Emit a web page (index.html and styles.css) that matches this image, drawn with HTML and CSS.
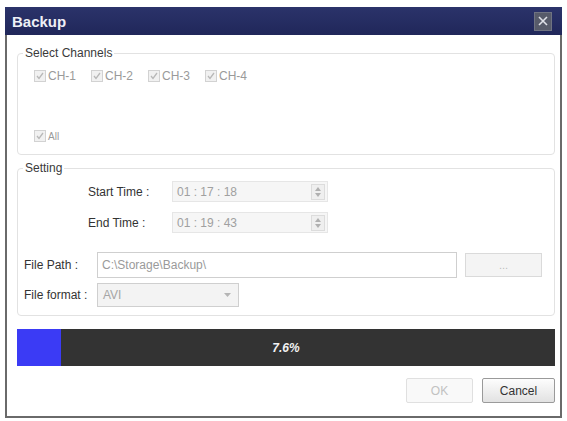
FILE: index.html
```html
<!DOCTYPE html>
<html lang="en">
<head>
    <meta charset="UTF-8">
    <meta name="viewport" content="width=device-width, initial-scale=1.0">
    <title>Backup</title>
    <link rel="stylesheet" href="styles.css">
</head>
<body>
    <div id="dialog">
        <div id="titlebar">
            <span id="title">Backup</span>
            <span id="closeBtn">
                <svg width="10" height="10" viewBox="0 0 10 10"><path d="M1 1 L9 9 M9 1 L1 9" stroke="#dfe1e8" stroke-width="1.6"/></svg>
            </span>
        </div>

        <div id="content">
            <fieldset class="group" id="channels">
                <legend>Select Channels</legend>
                <div class="check-row">
                    <label class="check"><span class="box"><svg width="8" height="8" viewBox="0 0 8 8"><path d="M1 4 L3 6.5 L7 1" fill="none" stroke="#b8b8b8" stroke-width="1.3"/></svg></span>CH-1</label>
                    <label class="check"><span class="box"><svg width="8" height="8" viewBox="0 0 8 8"><path d="M1 4 L3 6.5 L7 1" fill="none" stroke="#b8b8b8" stroke-width="1.3"/></svg></span>CH-2</label>
                    <label class="check"><span class="box"><svg width="8" height="8" viewBox="0 0 8 8"><path d="M1 4 L3 6.5 L7 1" fill="none" stroke="#b8b8b8" stroke-width="1.3"/></svg></span>CH-3</label>
                    <label class="check"><span class="box"><svg width="8" height="8" viewBox="0 0 8 8"><path d="M1 4 L3 6.5 L7 1" fill="none" stroke="#b8b8b8" stroke-width="1.3"/></svg></span>CH-4</label>
                </div>
                <div class="check-row" id="allRow">
                    <label class="check small"><span class="box"><svg width="8" height="8" viewBox="0 0 8 8"><path d="M1 4 L3 6.5 L7 1" fill="none" stroke="#b8b8b8" stroke-width="1.3"/></svg></span>All</label>
                </div>
            </fieldset>

            <fieldset class="group" id="setting">
                <legend>Setting</legend>
                <div class="time-row">
                    <span class="time-label">Start Time :</span>
                    <div class="time-input">
                        <span>01 : 17 : 18</span>
                        <span class="spin"><i class="up"></i><i class="down"></i></span>
                    </div>
                </div>
                <div class="time-row" id="endRow">
                    <span class="time-label">End Time :</span>
                    <div class="time-input">
                        <span>01 : 19 : 43</span>
                        <span class="spin"><i class="up"></i><i class="down"></i></span>
                    </div>
                </div>
                <div class="field-row" id="pathRow">
                    <span class="field-label">File Path :</span>
                    <div class="path-input">C:\Storage\Backup\</div>
                    <button class="browse-button">...</button>
                </div>
                <div class="field-row" id="formatRow">
                    <span class="field-label">File format :</span>
                    <div class="select">
                        <span>AVI</span>
                        <svg width="7" height="5" viewBox="0 0 7 5"><path d="M0 0 L7 0 L3.5 4 Z" fill="#b5b5b5"/></svg>
                    </div>
                </div>
            </fieldset>

            <div id="progress">
                <div id="progressFill" style="width: 44px"></div>
                <span id="progressText">7.6%</span>
            </div>

            <div id="buttons">
                <button class="dlg-button" id="okBtn" disabled>OK</button>
                <button class="dlg-button" id="cancelBtn">Cancel</button>
            </div>
        </div>
    </div>
</body>
</html>
```

FILE: styles.css
```css
* {
    box-sizing: border-box;
}

body {
    margin: 0;
    background-color: #fff;
    font-family: "Liberation Sans", Arial, sans-serif;
    font-size: 12px;
    color: #333;
}

#dialog {
    margin: 7px 5px 0 5px;
    width: 557px;
}

#titlebar {
    display: flex;
    align-items: center;
    justify-content: space-between;
    height: 28px;
    padding: 0 10px 0 7px;
    background: linear-gradient(#2b336a, #20275a);
}

#title {
    color: #eef0f6;
    font-size: 15px;
    font-weight: bold;
}

#closeBtn {
    display: flex;
    align-items: center;
    justify-content: center;
    width: 18px;
    height: 19px;
    border: 1px solid #6f7382;
    background: #575b6a;
}

#content {
    display: flex;
    flex-direction: column;
    height: 383px;
    padding: 11px 5px 0 10px;
    border: 2px solid #6a6a6a;
    border-top: none;
}

.group {
    margin: 0;
    border: 1px solid #e2e2e2;
    border-radius: 4px;
}

.group legend {
    padding: 0 2px;
    line-height: 14px;
    color: #3a3a3a;
}

#channels {
    padding: 10px 16px 12px 16px;
}

#channels legend {
    margin-left: -11px;
}

.check-row {
    display: flex;
    height: 12px;
    align-items: center;
}

#allRow {
    margin-top: 48px;
}

.check {
    display: flex;
    align-items: center;
    width: 57px;
    color: #9a9a9a;
    font-size: 12px;
}

.check.small {
    font-size: 10px;
}

.box {
    display: flex;
    align-items: center;
    justify-content: center;
    width: 12px;
    height: 12px;
    margin-right: 2px;
    border: 1px solid #d2d2d2;
    background: #f1f1f1;
}

#setting {
    margin-top: 6px;
    padding: 6px 12px 8px 6px;
}

#setting legend {
    margin-left: -1px;
}

.time-row {
    display: flex;
    align-items: center;
    height: 21px;
    padding-left: 64px;
}

#endRow {
    margin-top: 10px;
}

.time-label {
    width: 84px;
    color: #333;
}

.time-input {
    display: flex;
    align-items: center;
    justify-content: space-between;
    width: 156px;
    height: 21px;
    padding: 0 2px 0 4px;
    border: 1px solid #e6e6e6;
    background: #f6f6f6;
    color: #a0a0a0;
}

.spin {
    display: flex;
    flex-direction: column;
    align-items: center;
    justify-content: center;
    gap: 2px;
    width: 14px;
    height: 16px;
    border: 1px solid #dcdcdc;
    background: #efefef;
}

.spin i {
    width: 0;
    height: 0;
    border-left: 3px solid transparent;
    border-right: 3px solid transparent;
}

.spin .up {
    border-bottom: 4px solid #b0b0b0;
}

.spin .down {
    border-top: 4px solid #b0b0b0;
}

.field-row {
    display: flex;
    align-items: center;
}

#pathRow {
    margin-top: 19px;
}

#formatRow {
    margin-top: 5px;
}

.field-label {
    width: 73px;
    color: #333;
}

.path-input {
    display: flex;
    align-items: center;
    width: 360px;
    height: 26px;
    padding-left: 4px;
    border: 1px solid #cfcfcf;
    background: #fff;
    color: #9a9a9a;
}

.browse-button {
    width: 77px;
    height: 24px;
    margin-left: 8px;
    border: 1px solid #dadada;
    background: #f4f4f4;
    color: #bdbdbd;
    font-family: inherit;
    font-size: 11px;
}

.select {
    display: flex;
    align-items: center;
    justify-content: space-between;
    width: 142px;
    height: 24px;
    padding: 0 7px 0 5px;
    border: 1px solid #cfcfcf;
    background: #f3f3f3;
    color: #a5a5a5;
}

#progress {
    position: relative;
    display: flex;
    align-items: center;
    justify-content: center;
    height: 37px;
    margin-top: 13px;
    background: #333;
}

#progressFill {
    position: absolute;
    left: 0;
    top: 0;
    bottom: 0;
    background: #3b3bf5;
}

#progressText {
    position: relative;
    color: #f2f2f2;
    font-weight: bold;
    font-size: 12px;
    font-style: italic;
}

#buttons {
    display: flex;
    justify-content: flex-end;
    gap: 9px;
    margin-top: 12px;
}

.dlg-button {
    height: 25px;
    border-radius: 2px;
    font-family: inherit;
    font-size: 12px;
}

#okBtn {
    width: 67px;
    border: 1px solid #e0e0e0;
    background: #f9f9f9;
    color: #c2c2c2;
}

#cancelBtn {
    width: 73px;
    border: 1px solid #9a9a9a;
    background: linear-gradient(#fdfdfd, #e2e2e2);
    color: #333;
}
```
